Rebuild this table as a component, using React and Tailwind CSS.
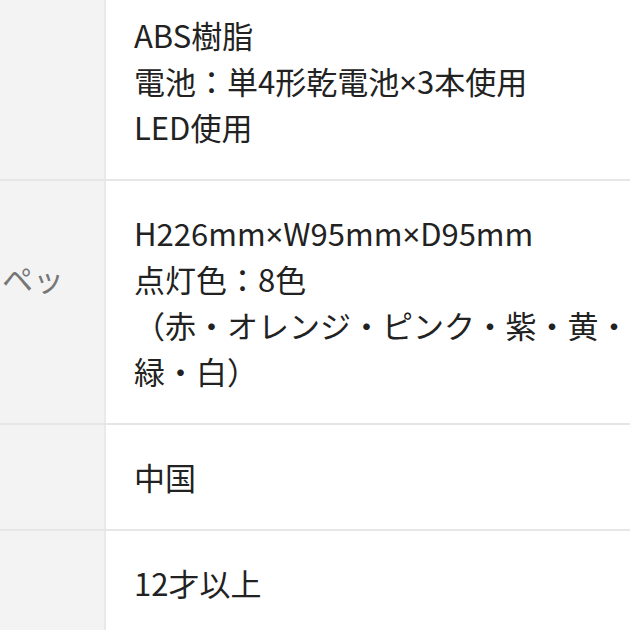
import React from 'react';

const rows = [
  { label: '', lines: ['ABS樹脂', '電池：単4形乾電池×3本使用', 'LED使用'] },
  {
    label: 'ペッ',
    lines: ['H226mm×W95mm×D95mm', '点灯色：8色', '（赤・オレンジ・ピンク・紫・黄・', '緑・白）'],
  },
  { label: '', lines: ['中国'] },
  { label: '', lines: ['12才以上'] },
];

// × is full width in the CJK font; the reference shows the narrow Latin one
const renderLine = (line) =>
  line.split('×').map((part, k, arr) => (
    <React.Fragment key={k}>
      {part}
      {k < arr.length - 1 && (
        <span className="leading-[0]" style={{ fontFamily: '"Noto Sans", sans-serif' }}>×</span>
      )}
    </React.Fragment>
  ));

const App = () => {
  return (
    <div
      className="w-[630px] h-[630px] overflow-hidden bg-white"
      style={{ fontFamily: '"Noto Sans CJK JP", "Noto Sans", sans-serif' }}
    >
      <div className="-mt-[17px]">
        {rows.map((row, i) => (
          <div key={i} className="flex border-b-2 border-[#e6e6e6]">
            <div className="w-[106px] shrink-0 bg-[#f3f3f3] border-r-2 border-[#e9e9e9] pl-[2px]">
              {row.label && (
                <div className="pt-[74px] text-[31px] leading-[46px] text-[#777] whitespace-nowrap">
                  {row.label}
                </div>
              )}
            </div>
            <div className="flex-1 pl-[28px] py-[29px] text-[31px] leading-[46px] text-[#222] whitespace-nowrap">
              {row.lines.map((line, j) => (
                <div key={j} className="h-[46px]">{renderLine(line)}</div>
              ))}
            </div>
          </div>
        ))}
      </div>
    </div>
  );
};

export default App;
